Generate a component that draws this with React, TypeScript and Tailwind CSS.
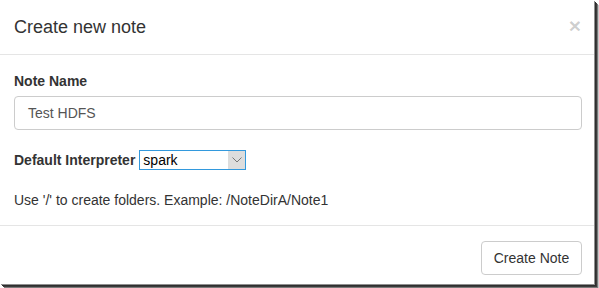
import React from "react";

export default function App() {
  return (
    <div className="w-[599px] h-[288px] bg-white overflow-hidden font-['Liberation_Sans',Arial,sans-serif] text-[#333]">
      <div className="w-[594px] h-[284px] bg-white overflow-hidden shadow-[1px_1px_0_#8f8f8f,2px_2px_0_#2e2e2e,3px_3px_0_#3c3c3c,4px_4px_0_#7a7a7a,5px_5px_0_#c8c8c8]">
        {/* Header */}
        <div className="h-[55px] border-b border-[#e5e5e5] pl-[14px] pr-[13px] pt-[14px] flex justify-between items-start">
          <h4 className="text-[18px] leading-[26px] font-normal m-0">Create new note</h4>
          <span className="text-[21px] leading-none font-bold text-black/20 mt-[1px]">×</span>
        </div>
        {/* Body */}
        <div className="pl-[14px] pr-[12px] pt-[16px] pb-[15px] text-[14px]">
          <label className="block font-bold leading-[20px] mb-[5px]">Note Name</label>
          <div className="h-[34px] w-full border border-[#ccc] rounded-[4px] px-[13px] flex items-center text-[#555] leading-[20px]">
            Test HDFS
          </div>
          <div className="mt-[20px] h-[20px] flex items-center">
            <span className="font-bold leading-[20px]">Default Interpreter</span>
            <div className="ml-[4px] w-[107px] h-[20px] border border-[#3399dd] bg-white flex items-stretch">
              <span className="flex-1 pl-[3px] leading-[18px] text-black">spark</span>
              <span className="w-[17px] bg-[#dddddd] flex items-center justify-center">
                <svg width="10" height="6" viewBox="0 0 10 6">
                  <polyline points="0.5,0.5 5,5 9.5,0.5" fill="none" stroke="#777" strokeWidth="1" />
                </svg>
              </span>
            </div>
          </div>
          <p className="mt-[20px] leading-[20px]">Use '/' to create folders. Example: /NoteDirA/Note1</p>
        </div>
        {/* Footer */}
        <div className="border-t border-[#e5e5e5] pl-[14px] pr-[12px] pt-[15px] flex justify-end">
          <button className="h-[34px] w-[101px] border border-[#ccc] rounded-[4px] bg-white text-[14px] leading-[20px] text-[#333]">
            Create Note
          </button>
        </div>
      </div>
    </div>
  );
}
